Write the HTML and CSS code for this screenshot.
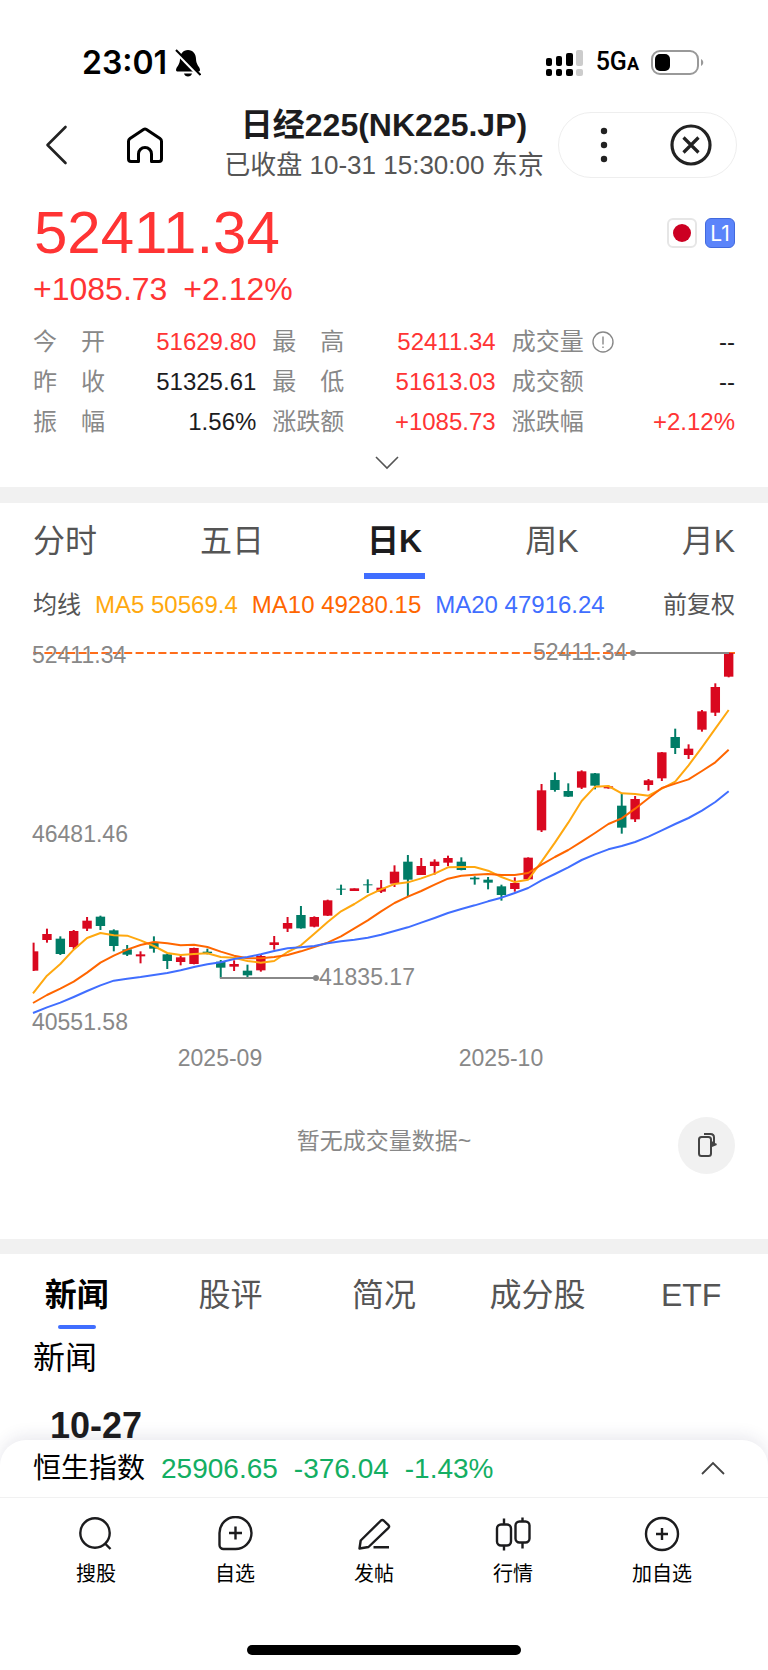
FILE: index.html
```html
<!DOCTYPE html>
<html lang="zh-CN">
<head>
    <meta charset="UTF-8">
    <meta name="viewport" content="width=device-width, initial-scale=1.0">
    <title>日经225(NK225.JP)</title>
    <link rel="stylesheet" href="styles.css">
</head>
<body>
    <div class="page">
        <div class="status-bar">
            <div class="status-left">
                <span class="clock">23:01</span>
                <svg width="26" height="28" viewBox="0 0 26 28">
                    <path d="M13 1c5 0 8 4 8 9 0 6 4 8 4 11 0 1-1 1.500-2 1.500H3c-1 0-2-.5-2-1.500 0-3 4-5 4-11 0-5 3-9 8-9zM9 24.500h8c-.5 2-2 3-4 3s-3.500-1-4-3z"/>
                    <path d="M-1 1L25 28" stroke="#fff" stroke-width="3"/>
                    <path d="M1 1L25.500 26" stroke="#000" stroke-width="2"/>
                </svg>
            </div>
            <div class="status-right">
                <svg width="38" height="28" viewBox="0 0 38 28">
                    <rect x="0" y="9" width="6" height="8" rx="2"/>
                    <rect x="10" y="7" width="6" height="10" rx="2"/>
                    <rect x="20" y="4" width="7" height="13" rx="2"/>
                    <rect x="30" y="1" width="7" height="16" rx="2" fill="#ccc"/>
                    <rect x="0" y="20" width="6" height="7" rx="2"/>
                    <rect x="10" y="20" width="6" height="7" rx="2"/>
                    <rect x="20" y="20" width="7" height="7" rx="2"/>
                    <rect x="30" y="20" width="7" height="7" rx="2" fill="#ccc"/>
                </svg>
                <span class="network">5G<small>A</small></span>
                <svg width="53" height="26" viewBox="0 0 53 26">
                    <rect x="1" y="1" width="46" height="23" rx="8" fill="none" stroke="#999" stroke-width="2"/>
                    <rect x="4" y="4" width="15" height="17" rx="5"/>
                    <path d="M50 9c3 1.500 3 5.500 0 7z" fill="#999"/>
                </svg>
            </div>
        </div>

        <header class="header">
            <div class="header-left">
                <button class="icon-btn" aria-label="返回">
                    <svg width="24" height="40" viewBox="0 0 24 40" fill="none" stroke="#222" stroke-width="2.6" stroke-linecap="round" stroke-linejoin="round">
                        <path d="M20.500 2L2.500 20l18 18"/>
                    </svg>
                </button>
                <button class="icon-btn" aria-label="首页">
                    <svg width="36" height="36" viewBox="0 0 36 36" fill="none" stroke="#000" stroke-width="3" stroke-linejoin="round">
                        <path d="M16.500 2.500q1.500-.9 3 0L33 11.500q1.500 1 1.500 2.800V32q0 2.500-2.500 2.500h-7.500V27a6.500 6.500 0 0 0-13 0v7.500H4Q1.500 34.500 1.500 32V14.300q0-1.800 1.500-2.800z"/>
                    </svg>
                </button>
            </div>
            <div class="header-title">
                <h1>日经225(NK225.JP)</h1>
                <p>已收盘 10-31 15:30:00 东京</p>
            </div>
            <div class="capsule">
                <button class="icon-btn" aria-label="更多">
                    <svg width="42" height="40" viewBox="0 0 42 40" fill="#222">
                        <circle cx="21" cy="6" r="3.200"/>
                        <circle cx="21" cy="20" r="3.200"/>
                        <circle cx="21" cy="34" r="3.200"/>
                    </svg>
                </button>
                <button class="icon-btn" aria-label="关闭">
                    <svg width="42" height="42" viewBox="0 0 42 42" fill="none" stroke="#222" stroke-width="3.2">
                        <circle cx="21" cy="21" r="19"/>
                        <path d="M13.500 13.500l15 15M28.500 13.500l-15 15"/>
                    </svg>
                </button>
            </div>
        </header>

        <section class="quote">
            <div class="price-row">
                <span class="price">52411.34</span>
                <div class="badges">
                    <span class="badge flag"></span>
                    <span class="badge level">L1</span>
                </div>
            </div>
            <div class="change"><span>+1085.73</span><span>+2.12%</span></div>
            <dl class="stats">
                <div class="stat"><dt>今 开</dt><dd class="up">51629.80</dd></div>
                <div class="stat"><dt>最 高</dt><dd class="up">52411.34</dd></div>
                <div class="stat">
                    <dt>成交量</dt>
                    <svg class="info" width="22" height="22" viewBox="0 0 22 22" fill="none" stroke="#888" stroke-width="1.4">
                        <circle cx="11" cy="11" r="10"/>
                        <path d="M11 5.500v8M11 15.500v1.500"/>
                    </svg>
                    <dd>--</dd>
                </div>
                <div class="stat"><dt>昨 收</dt><dd>51325.61</dd></div>
                <div class="stat"><dt>最 低</dt><dd class="up">51613.03</dd></div>
                <div class="stat"><dt>成交额</dt><dd>--</dd></div>
                <div class="stat"><dt>振 幅</dt><dd>1.56%</dd></div>
                <div class="stat"><dt>涨跌额</dt><dd class="up">+1085.73</dd></div>
                <div class="stat"><dt>涨跌幅</dt><dd class="up">+2.12%</dd></div>
            </dl>
            <button class="expand" aria-label="展开">
                <svg width="24" height="14" viewBox="0 0 24 14" fill="none" stroke="#555" stroke-width="1.6">
                    <path d="M1 1l11 11L23 1"/>
                </svg>
            </button>
        </section>

        <section class="chart-section">
            <div class="chart-tabs">
                <button class="chart-tab">分时</button>
                <button class="chart-tab">五日</button>
                <button class="chart-tab active">日K</button>
                <button class="chart-tab">周K</button>
                <button class="chart-tab">月K</button>
            </div>
            <div class="ma-row">
                <span>均线</span>
                <span class="ma5">MA5 50569.4</span>
                <span class="ma10">MA10 49280.15</span>
                <span class="ma20">MA20 47916.24</span>
                <button class="adjust">前复权</button>
            </div>
            <svg class="chart" id="chart" viewBox="0 0 702 440">
                <path class="last-line" d="M0 13H702"/>
                <g id="candles"></g>
                <g id="averages"></g>
                <g class="marker">
                    <path d="M600 13H696M187 338H283"/>
                    <circle cx="600" cy="13" r="3"/>
                    <circle cx="283" cy="338" r="3"/>
                </g>
                <text x="-1" y="23">52411.34</text>
                <text x="-1" y="202">46481.46</text>
                <text x="-1" y="390">40551.58</text>
                <text x="500" y="20">52411.34</text>
                <text x="286" y="345">41835.17</text>
                <text x="187" y="426" text-anchor="middle">2025-09</text>
                <text x="468" y="426" text-anchor="middle">2025-10</text>
            </svg>
            <div class="volume">
                <p>暂无成交量数据~</p>
                <button class="rotate" aria-label="横屏">
                    <svg width="24" height="28" viewBox="0 0 24 28" fill="none" stroke="#444" stroke-width="2">
                        <rect x="4" y="5" width="12" height="19" rx="2.500"/>
                        <path d="M9 2h6.500q3.500 0 3.500 3.500V13M18 9.500v4l3.500-1.500"/>
                    </svg>
                </button>
            </div>
        </section>

        <section class="news">
            <div class="news-tabs">
                <button class="news-tab active">新闻</button>
                <button class="news-tab">股评</button>
                <button class="news-tab">简况</button>
                <button class="news-tab">成分股</button>
                <button class="news-tab">ETF</button>
            </div>
            <h2>新闻</h2>
            <h3>10-27</h3>
        </section>

        <footer class="sheet">
            <div class="index-row">
                <span>恒生指数</span>
                <span class="down">25906.65</span>
                <span class="down">-376.04</span>
                <span class="down">-1.43%</span>
                <button class="icon-btn" aria-label="展开指数">
                    <svg width="26" height="16" viewBox="0 0 26 16" fill="none" stroke="#444" stroke-width="1.8">
                        <path d="M2 13L13 2l11 11"/>
                    </svg>
                </button>
            </div>
            <nav class="bottom-nav">
                <a href="#search">
                    <svg viewBox="0 0 36 36">
                        <circle cx="17" cy="17" r="14.700"/>
                        <path d="M27 27.500l5.500 5.500"/>
                    </svg>
                    搜股
                </a>
                <a href="#watchlist">
                    <svg viewBox="0 0 36 36">
                        <path d="M2.500 17a16 16 0 1 1 16 16h-12a4 4 0 0 1-4-4zM18.500 10.500v13M12 17h13"/>
                    </svg>
                    自选
                </a>
                <a href="#post">
                    <svg viewBox="0 0 36 36">
                        <path d="M3.500 32.500l1.200-8L25 4.500q1.300-1 2.600 0l4.900 4.700q1.200 1.300 0 2.600L12.500 31zM17.500 31.300H33"/>
                    </svg>
                    发帖
                </a>
                <a href="#market">
                    <svg viewBox="0 0 36 36">
                        <rect x="2" y="8.500" width="14" height="21" rx="4"/>
                        <rect x="20.500" y="5.500" width="14" height="21" rx="4"/>
                        <path d="M9 2.500v6M9 29.500v5M27.500 1.500v4M27.500 26.500v6"/>
                    </svg>
                    行情
                </a>
                <a href="#add">
                    <svg viewBox="0 0 36 36">
                        <circle cx="18" cy="18" r="16"/>
                        <path d="M18 12v12M12 18h12"/>
                    </svg>
                    加自选
                </a>
            </nav>
            <div class="home-indicator"></div>
        </footer>
    </div>

    <script src="chart.js"></script>
</body>
</html>
```
FILE: styles.css
```css
* {
    margin: 0;
    padding: 0;
    box-sizing: border-box;
}

body {
    font-family: "Liberation Sans", "Noto Sans CJK SC", sans-serif;
    background: #fff;
    color: #1c1c1e;
}

button {
    background: none;
    border: none;
    font: inherit;
    color: inherit;
    cursor: pointer;
}

svg {
    display: block;
    flex: none;
}

.page {
    min-height: 100vh;
    display: flex;
    flex-direction: column;
}

.icon-btn {
    display: flex;
    align-items: center;
    justify-content: center;
}

/* Status bar */
.status-bar {
    display: flex;
    justify-content: space-between;
    align-items: center;
    height: 105px;
    padding: 20px 64px 0 82px;
    color: #000;
}

.status-left,
.status-right {
    display: flex;
    align-items: center;
}

.status-left {
    gap: 8px;
}

.status-right {
    gap: 12px;
}

.clock {
    font-family: Inter, sans-serif;
    font-size: 32px;
    font-weight: 600;
    line-height: 40px;
}

.network {
    font-family: Roboto, sans-serif;
    font-size: 25px;
    font-weight: 500;
    line-height: 28px;
}

.network small {
    font-size: 18px;
    font-weight: 700;
}

/* Header */
.header {
    display: grid;
    grid-template-columns: 1fr auto 1fr;
    align-items: center;
    height: 80px;
    padding: 0 31px;
}

.header-left {
    display: flex;
    align-items: center;
    gap: 58px;
    padding-left: 14px;
}

.header-title {
    text-align: center;
    white-space: nowrap;
}

.header-title h1 {
    font-size: 32px;
    line-height: 40px;
}

.header-title p {
    font-size: 26px;
    line-height: 40px;
    color: #555;
}

.capsule {
    justify-self: end;
    display: flex;
    align-items: center;
    justify-content: space-between;
    width: 179px;
    height: 66px;
    padding: 0 24px;
    border: 1px solid #eee;
    border-radius: 33px;
}

/* Quote */
.quote {
    padding: 18px 33px 4px;
    border-bottom: 16px solid #f1f1f1;
}

.price-row {
    display: flex;
    justify-content: space-between;
    align-items: center;
}

.price {
    padding-left: 1px;
    font-size: 60px;
    line-height: 60px;
    color: #ff3434;
}

.badges {
    display: flex;
    gap: 8px;
}

.badge {
    display: flex;
    align-items: center;
    justify-content: center;
    width: 30px;
    height: 30px;
    border-radius: 6px;
}

.flag {
    border: 2px solid #e6e6e6;
}

.flag::before {
    content: "";
    width: 18px;
    height: 18px;
    border-radius: 50%;
    background: #cc0022;
}

.level {
    border: 1px solid #4169dd;
    background: #5b84fa;
    color: #fff;
    font-family: Inter, sans-serif;
    font-size: 21px;
}

.change {
    display: flex;
    gap: 16px;
    margin-top: 6px;
    font-size: 32px;
    line-height: 40px;
    color: #ff3434;
}

.stats {
    display: grid;
    grid-template-columns: repeat(3, 1fr);
    column-gap: 16px;
    margin-top: 13px;
    font-size: 24px;
    line-height: 40px;
}

.stat {
    display: flex;
    align-items: center;
}

.stat dt {
    width: 72px;
    color: #888;
    text-align: justify;
    text-align-last: justify;
}

.stat dd {
    margin-left: auto;
}

.info {
    margin-left: 8px;
}

.stat .up {
    color: #ff3434;
}

.expand {
    display: flex;
    align-items: center;
    justify-content: center;
    width: 100%;
    height: 41px;
    padding-left: 5px;
}

/* Chart */
.chart-section {
    border-bottom: 15px solid #f1f1f1;
}

.chart-tabs {
    display: flex;
    justify-content: space-between;
    padding: 0 33px;
}

.chart-tab {
    position: relative;
    font-size: 32px;
    line-height: 76px;
    color: #555;
}

.chart-tab.active {
    font-weight: bold;
    color: #1c1c1e;
}

.chart-tab.active::after {
    content: "";
    position: absolute;
    left: -3px;
    right: -3px;
    bottom: 0;
    height: 6px;
    background: #406eff;
}

.ma-row {
    display: flex;
    gap: 14px;
    padding: 0 33px;
    font-size: 24px;
    line-height: 52px;
    color: #555;
    white-space: nowrap;
}

.ma5 {
    color: #ffa80f;
}

.ma10 {
    color: #ff6600;
}

.ma20 {
    color: #406eff;
}

.adjust {
    margin-left: auto;
}

.chart {
    width: calc(100% - 66px);
    margin: 9px 33px 0;
    overflow: visible;
}

.chart text {
    font-size: 23px;
    fill: #888;
}

.last-line {
    stroke: #ff6d1a;
    stroke-width: 2;
    stroke-dasharray: 8 3.4;
}

.candle-up {
    fill: #d9081f;
    stroke: #d9081f;
}

.candle-down {
    fill: #007c66;
    stroke: #007c66;
}

.wick {
    stroke-width: 2;
}

.body {
    stroke: none;
}

.average {
    fill: none;
    stroke-width: 2;
    stroke-linejoin: round;
}

.marker path {
    stroke: #888;
    stroke-width: 2;
}

.marker circle {
    fill: #888;
}

.volume {
    display: grid;
    grid-template-columns: 1fr auto 1fr;
    padding: 37px 33px 65px;
}

.volume p {
    grid-column: 2;
    font-size: 23px;
    line-height: 48px;
    color: #888;
}

.rotate {
    justify-self: end;
    display: flex;
    align-items: center;
    justify-content: center;
    width: 57px;
    height: 57px;
    border-radius: 50%;
    background: #f1f1f1;
}

/* News */
.news-tabs {
    display: grid;
    grid-template-columns: repeat(5, 1fr);
}

.news-tab {
    position: relative;
    font-size: 32px;
    line-height: 82px;
    color: #555;
}

.news-tab.active {
    font-weight: bold;
    color: #000;
}

.news-tab.active::after {
    content: "";
    position: absolute;
    left: 50%;
    bottom: 7px;
    width: 38px;
    height: 4px;
    margin-left: -19px;
    border-radius: 2px;
    background: #406eff;
}

.news h2 {
    padding: 0 33px;
    font-size: 32px;
    font-weight: normal;
    line-height: 44px;
    color: #000;
}

.news h3 {
    margin-top: 26px;
    padding: 0 50px;
    font-size: 36px;
    line-height: 40px;
}

/* Bottom sheet */
.sheet {
    position: relative;
    margin-top: -6px;
    padding-bottom: 15px;
    border-radius: 26px 26px 0 0;
    background: #fff;
    box-shadow: 0 -4px 16px rgba(40, 40, 90, 0.1);
}

.index-row {
    display: flex;
    gap: 16px;
    padding: 0 42px 0 33px;
    border-bottom: 1px solid #f1f1f1;
    font-size: 28px;
    line-height: 57px;
    color: #000;
}

.index-row .icon-btn {
    margin-left: auto;
}

.down {
    color: #13ae62;
}

.bottom-nav {
    display: flex;
    justify-content: space-between;
    padding: 18px 76px 57px;
}

.bottom-nav a {
    display: flex;
    flex-direction: column;
    align-items: center;
    gap: 8px;
    font-size: 20px;
    line-height: 28px;
    color: #000;
    text-decoration: none;
}

.bottom-nav svg {
    width: 36px;
    height: 36px;
    fill: none;
    stroke: #1c1c1e;
    stroke-width: 2.4;
    stroke-linejoin: round;
}

.home-indicator {
    width: 274px;
    height: 10px;
    margin: 0 auto;
    border-radius: 5px;
    background: #000;
}
```
FILE: chart.js
```js
const SVG_NS = 'http://www.w3.org/2000/svg';
const STEP = 13.367;
const UNIT = 3; // data is stored in thirds of a chart unit

// high, body top, body bottom, low, 1 = up / 0 = down
const candles = [
    [908, 934, 992, 993, 1], [866, 882, 900, 908, 1], [889, 896, 942, 945, 0],
    [870, 873, 921, 928, 1], [831, 842, 866, 873, 1], [827, 830, 858, 870, 0],
    [868, 871, 918, 934, 0], [915, 928, 944, 948, 0], [934, 943, 949, 970, 1],
    [889, 909, 926, 938, 0], [941, 943, 963, 987, 0], [943, 952, 966, 976, 1],
    [923, 924, 972, 973, 1], [926, 935, 939, 943, 0], [960, 965, 983, 1015, 0],
    [961, 972, 980, 993, 1], [974, 992, 1006, 1012, 0], [944, 948, 991, 995, 1],
    [888, 907, 915, 929, 1], [831, 849, 866, 876, 1], [798, 825, 865, 866, 0],
    [829, 831, 860, 862, 1], [779, 781, 827, 828, 1], [734, 746, 749, 765, 0],
    [745, 745, 753, 753, 1], [718, 733, 736, 759, 0], [720, 743, 755, 759, 1],
    [676, 695, 731, 741, 1], [645, 665, 719, 769, 0], [654, 678, 705, 705, 1],
    [658, 665, 678, 704, 1], [647, 654, 668, 678, 1], [652, 665, 690, 691, 0],
    [709, 713, 718, 734, 0], [711, 719, 728, 748, 0], [734, 739, 765, 782, 0],
    [712, 729, 747, 755, 1], [652, 653, 718, 719, 1], [432, 451, 571, 576, 1],
    [397, 420, 450, 455, 0], [430, 453, 470, 471, 0], [391, 394, 443, 447, 1],
    [399, 400, 437, 448, 0], [437, 439, 445, 446, 1], [462, 497, 563, 581, 0],
    [468, 477, 538, 546, 1], [417, 421, 435, 452, 1], [336, 337, 415, 423, 1],
    [266, 291, 324, 342, 0], [313, 326, 345, 357, 1], [210, 214, 269, 275, 1],
    [130, 141, 218, 228, 1], [38, 39, 110, 112, 1]
];

const averages = [
    {
        color: '#ffa80f',
        values: [
            1060, 1007, 972, 929, 894, 879, 886, 887, 901, 918, 939, 945, 942, 940,
            951, 953, 963, 968, 963, 936, 916, 881, 846, 814, 792, 767, 748, 732,
            727, 715, 701, 682, 681, 681, 692, 711, 726, 719, 665, 608, 548, 483,
            440, 438, 460, 462, 467, 446, 425, 376, 322, 266, 210
        ]
    },
    {
        color: '#ff6600',
        values: [
            1089, 1065, 1046, 1025, 998, 968, 947, 929, 915, 906, 910, 916, 914, 921,
            935, 947, 955, 955, 951, 945, 934, 921, 908, 889, 865, 841, 814, 789,
            770, 753, 734, 716, 707, 704, 702, 705, 705, 699, 674, 651, 630, 605,
            579, 552, 535, 506, 475, 444, 431, 418, 393, 367, 329
        ]
    },
    {
        color: '#406eff',
        values: [
            1119, 1102, 1088, 1071, 1053, 1036, 1022, 1016, 1011, 1005, 999, 991, 981, 973,
            967, 957, 951, 943, 933, 925, 922, 918, 910, 904, 899, 893, 884, 873,
            862, 848, 834, 819, 807, 796, 784, 773, 759, 744, 721, 702, 682, 660,
            643, 628, 618, 606, 590, 571, 552, 534, 512, 486, 454
        ]
    }
];

function add(parent, name, attrs) {
    const el = document.createElementNS(SVG_NS, name);
    for (const key in attrs) {
        el.setAttribute(key, attrs[key]);
    }
    parent.appendChild(el);
    return el;
}

const candleGroup = document.getElementById('candles');
candles.forEach(([high, top, bottom, low, up], i) => {
    const x = 0.6 + i * STEP;
    const left = Math.max(x - 4.7, 0);
    const group = add(candleGroup, 'g', { class: up ? 'candle-up' : 'candle-down' });
    add(group, 'path', { class: 'wick', d: `M${x} ${high / UNIT}V${low / UNIT}` });
    add(group, 'rect', {
        class: 'body',
        x: left,
        y: top / UNIT,
        width: x + 4.7 - left,
        height: (bottom - top) / UNIT
    });
});

const averageGroup = document.getElementById('averages');
averages.forEach(({ color, values }) => {
    const points = values.map((y, i) => `${i ? 0.6 + i * STEP : 0},${y / UNIT}`);
    add(averageGroup, 'polyline', { class: 'average', points: points.join(' '), stroke: color });
});
```
